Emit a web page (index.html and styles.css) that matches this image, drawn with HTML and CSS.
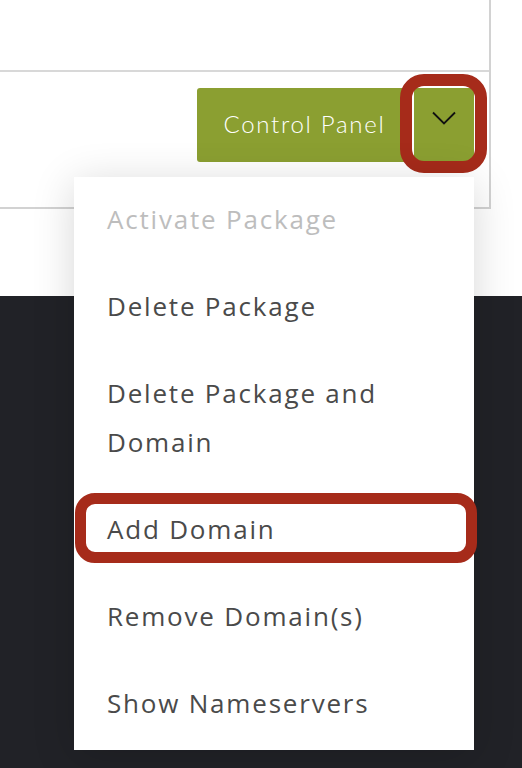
FILE: index.html
```html
<!DOCTYPE html>
<html lang="en">
<head>
<meta charset="utf-8">
<title>Package actions</title>
<link rel="stylesheet" href="styles.css">
</head>
<body>
<main class="page">
  <section class="card">
    <div class="card-row card-row-top"></div>
    <div class="card-row card-row-actions">
      <div class="btn-group">
        <button class="btn btn-main" type="button">Control Panel</button>
        <button class="btn btn-toggle" type="button" aria-label="More actions">
          <svg class="chevron" width="24" height="14" viewBox="0 0 24 14" aria-hidden="true">
            <path d="M1 1.5 L12 12.5 L23 1.5" fill="none" stroke="#111" stroke-width="1.8"/>
          </svg>
          <span class="mark mark-toggle"></span>
        </button>
        <ul class="menu">
          <li class="menu-item is-disabled">Activate Package</li>
          <li class="menu-item">Delete Package</li>
          <li class="menu-item">Delete Package and Domain</li>
          <li class="menu-item is-marked">Add Domain<span class="mark mark-item"></span></li>
          <li class="menu-item">Remove Domain(s)</li>
          <li class="menu-item">Show Nameservers</li>
        </ul>
      </div>
    </div>
  </section>
  <div class="spacer"></div>
  <footer class="footer"></footer>
</main>
</body>
</html>
```
FILE: styles.css
```css
html, body {
  margin: 0;
  padding: 0;
  background: #ffffff;
}
body {
  font-family: "Open Sans", "Liberation Sans", sans-serif;
  width: 522px;
  height: 768px;
  overflow: hidden;
}
.page {
  display: flex;
  flex-direction: column;
  height: 768px;
}
.card {
  width: 491px;
  box-sizing: border-box;
  border-right: 2px solid #d2d2d2;
  border-bottom: 2px solid #d2d2d2;
  background: #fff;
}
.card-row-top {
  height: 70px;
  border-bottom: 2px solid #d8d8d8;
}
.card-row-actions {
  display: flex;
  justify-content: flex-end;
  padding: 16px 15px 45px 0;
}
.btn-group {
  position: relative;
  display: flex;
  gap: 2px;
}
.btn {
  border: 0;
  margin: 0;
  background: #8b9f31;
  color: #fff;
  height: 74px;
  font-family: "Lato", "Open Sans", sans-serif;
  font-size: 24px;
  font-weight: 300;
  cursor: pointer;
}
.btn-main {
  width: 215px;
  border-radius: 3px 0 0 3px;
  padding: 0 0 4px;
  letter-spacing: 1.7px;
}
.btn-toggle {
  position: relative;
  width: 60px;
  border-radius: 0 3px 3px 0;
  display: flex;
  align-items: center;
  justify-content: center;
  padding: 0 0 14px;
}
.mark {
  position: absolute;
  border: 12px solid #a62b1a;
  pointer-events: none;
}
.mark-toggle {
  top: -14px;
  left: -14px;
  right: -13px;
  bottom: -11px;
  border-radius: 24px;
}
.menu {
  position: absolute;
  top: 89px;
  right: 0;
  width: 400px;
  margin: 0;
  padding: 0 0 2px;
  list-style: none;
  background: #fff;
  box-shadow: 0 6px 40px rgba(0, 0, 0, 0.16);
  z-index: 2;
}
.menu-item {
  position: relative;
  padding: 18px 40px 20px 33px;
  font-size: 26px;
  line-height: 49px;
  color: #4a4a4a;
  letter-spacing: 1.8px;
}
.menu-item.is-disabled {
  color: #bdbdbd;
}
.mark-item {
  top: 6px;
  left: 1px;
  right: -3px;
  bottom: 11px;
  border-width: 11px;
  border-radius: 20px;
}
.spacer {
  height: 87px;
  flex: none;
}
.footer {
  flex: 1;
  background: #212227;
}
```
